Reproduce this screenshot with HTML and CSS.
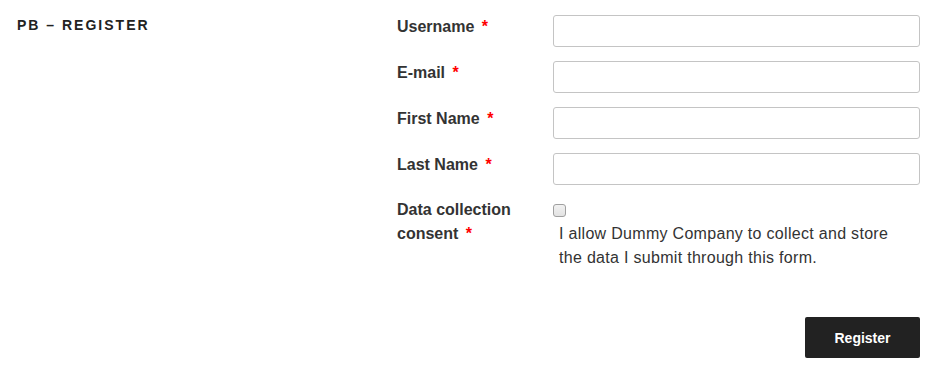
FILE: index.html
```html
<!DOCTYPE html>
<html lang="en">
<head>
  <meta charset="UTF-8">
  <title>PB – Register</title>
  <link rel="stylesheet" href="styles.css">
</head>
<body>
  <div class="page">
    <header class="page-header">
      <h2 class="page-title">PB – Register</h2>
    </header>

    <form class="register-form">
      <div class="form-row">
        <label class="form-label" for="username">Username <span class="required">*</span></label>
        <input class="form-input" type="text" id="username">
      </div>
      <div class="form-row">
        <label class="form-label" for="email">E-mail <span class="required">*</span></label>
        <input class="form-input" type="text" id="email">
      </div>
      <div class="form-row">
        <label class="form-label" for="first-name">First Name <span class="required">*</span></label>
        <input class="form-input" type="text" id="first-name">
      </div>
      <div class="form-row">
        <label class="form-label" for="last-name">Last Name <span class="required">*</span></label>
        <input class="form-input" type="text" id="last-name">
      </div>
      <div class="form-row">
        <label class="form-label consent-label" for="consent">Data collection consent <span class="required">*</span></label>
        <div class="consent-field">
          <div class="checkbox-line">
            <input class="form-checkbox" type="checkbox" id="consent">
          </div>
          <p class="consent-text">I allow Dummy Company to collect and store the data I submit through this form.</p>
        </div>
      </div>

      <div class="form-actions">
        <button class="submit-btn" type="submit">Register</button>
      </div>
    </form>
  </div>
</body>
</html>
```

FILE: styles.css
```css
* {
  box-sizing: border-box;
  margin: 0;
  padding: 0;
}

body {
  background: #ffffff;
  color: #333333;
  font-family: 'Liberation Sans', Arial, sans-serif;
  font-size: 16px;
  line-height: 24px;
}

.page {
  display: flex;
  padding-top: 14px;
}

.page-header {
  width: 397px;
  padding-left: 17px;
  padding-top: 1px;
}

.page-title {
  font-size: 14px;
  font-weight: 700;
  line-height: 20px;
  letter-spacing: 2px;
  text-transform: uppercase;
  color: #222222;
}

.register-form {
  width: 523px;
}

.form-row {
  display: flex;
  align-items: flex-start;
  margin-bottom: 13px;
}

.form-label {
  width: 156px;
  flex-shrink: 0;
  padding-top: 1px;
  font-weight: 700;
  color: #333333;
}

.consent-label {
  padding-top: 0;
  padding-right: 16px;
}

.required {
  color: #ff0000;
  margin-left: 3px;
}

.form-input {
  width: 367px;
  height: 32px;
  margin-top: 1px;
  border: 1px solid #c4c4c4;
  border-radius: 3px;
  background: #ffffff;
  font-family: inherit;
  font-size: 16px;
}

.consent-field {
  width: 367px;
}

.checkbox-line {
  height: 24px;
  display: flex;
  align-items: center;
}

.form-checkbox {
  appearance: none;
  width: 13px;
  height: 13px;
  border: 1px solid #a0a0a0;
  border-radius: 3px;
  background: linear-gradient(#f2f2f2, #e2e2e2);
}

.consent-text {
  padding-left: 6px;
  padding-right: 20px;
  letter-spacing: 0.3px;
  color: #333333;
}

.form-actions {
  display: flex;
  justify-content: flex-end;
  padding-top: 34px;
}

.submit-btn {
  background: #222222;
  color: #ffffff;
  border: none;
  border-radius: 2px;
  width: 115px;
  height: 41px;
  font-family: inherit;
  font-size: 14px;
  font-weight: 700;
  cursor: pointer;
}
```
